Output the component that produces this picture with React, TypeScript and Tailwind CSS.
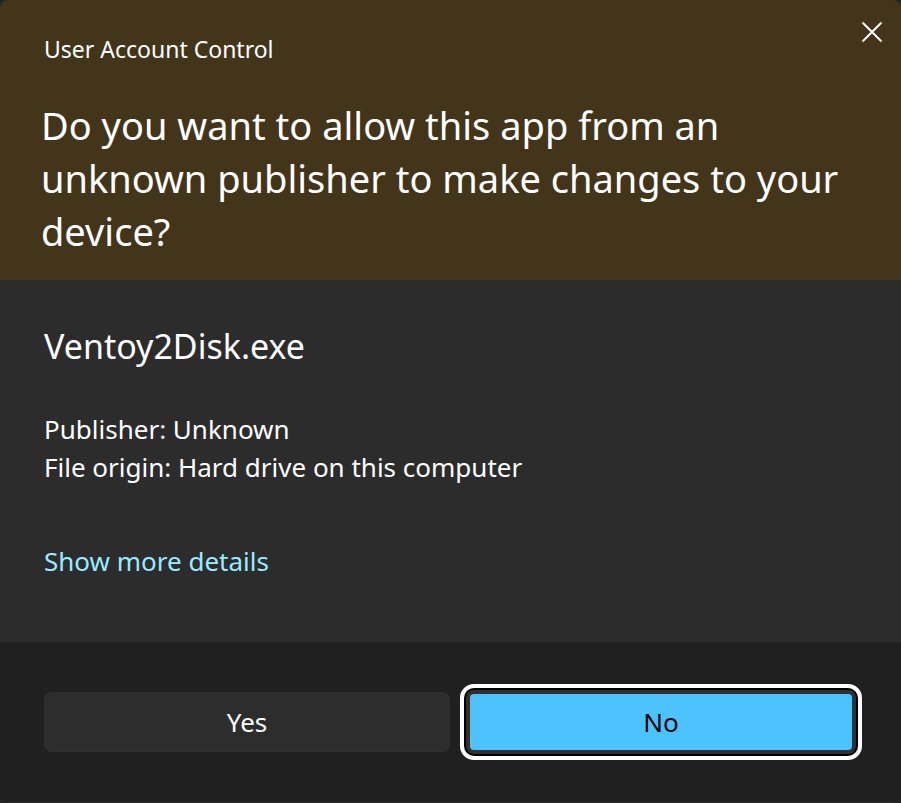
export default function App() {
  return (
    <div className="min-h-screen bg-[#202327] font-['Noto_Sans',sans-serif]">
      <main
        role="dialog"
        aria-labelledby="title"
        className="flex min-h-screen flex-col overflow-hidden rounded-lg border-b border-[#2b2b2b] bg-[#202020] text-white"
      >
        <header className="flex items-start justify-between bg-[#433519] pb-[22px] pl-[41px]">
          <div className="pt-8">
            <p className="pl-[3px] text-[23px] leading-[34px]">User Account Control</p>
            <h1 id="title" className="mt-[33px] text-[38px] leading-[53px]">
              Do you want to allow this app from an
              <br />
              unknown publisher to make changes to your
              <br />
              device?
            </h1>
          </div>
          <button type="button" aria-label="Close" className="-ml-12 mt-3 mr-[9px] flex size-10 shrink-0 items-center justify-center">
            <svg viewBox="0 0 22 22" className="size-[22px]" fill="none" stroke="currentColor" strokeWidth="2" aria-hidden="true">
              <path d="M1.5 1.5 20.5 20.5M20.5 1.5 1.5 20.5" />
            </svg>
          </button>
        </header>
        <section className="grow bg-[#2c2c2c] px-11 pt-[42px]">
          <h2 className="text-[34px] leading-[48px]">Ventoy2Disk.exe</h2>
          <p className="mt-10 text-[26px] leading-[38px]">
            Publisher: Unknown
            <br />
            File origin: Hard drive on this computer
          </p>
          <a href="#details" className="mt-14 inline-block text-[26px] leading-[38px] text-[#99ebff]">
            Show more details
          </a>
        </section>
        <footer className="grid grid-cols-[406fr_402fr] items-center gap-[10px] pt-[42px] pr-[39px] pb-[42px] pl-11 text-[26px]">
          <button type="button" className="h-[60px] rounded-lg border-2 border-[#2f2f2f] bg-[#2d2d2d]">
            Yes
          </button>
          <button type="button" className="h-[76px] rounded-[14px] border-4 border-white bg-black p-[2px] text-black">
            <span className="flex h-full items-center justify-center rounded-lg border-4 border-[#303030] bg-[#303030]">
              <span className="flex size-full items-center justify-center rounded-sm bg-[#4cc2ff]">No</span>
            </span>
          </button>
        </footer>
      </main>
    </div>
  );
}
